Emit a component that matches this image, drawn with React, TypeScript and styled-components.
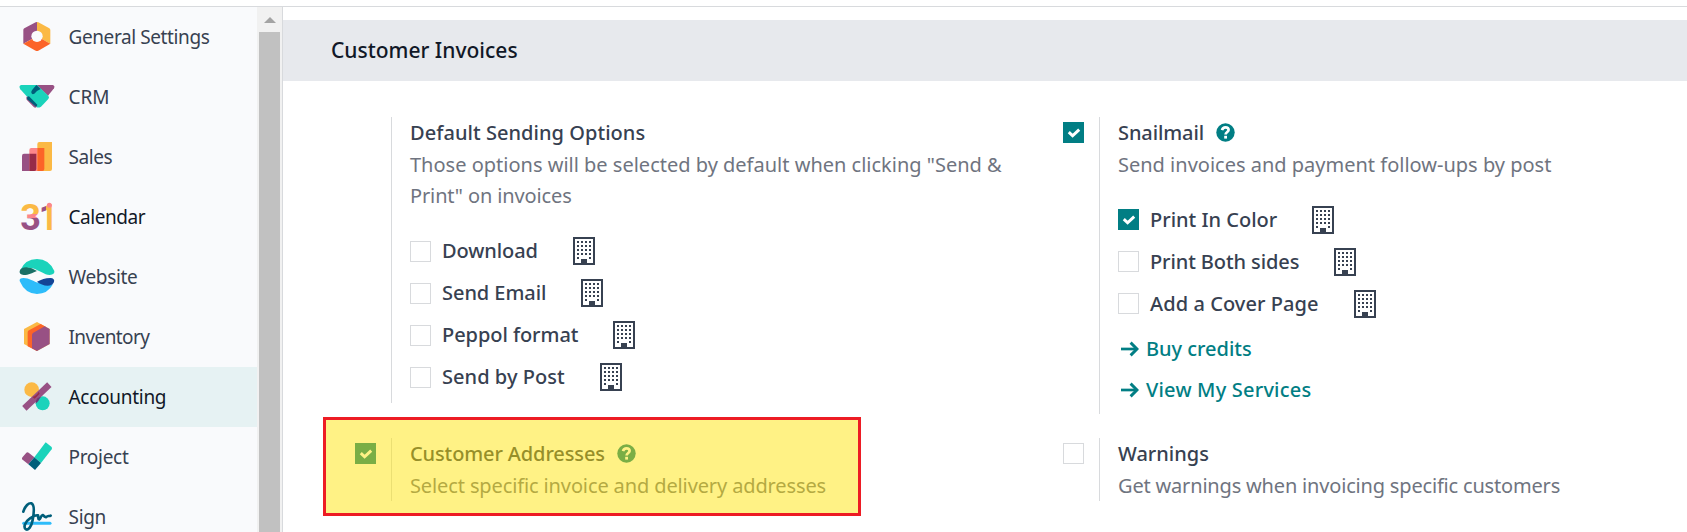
import React from 'react';
import styled, { createGlobalStyle } from 'styled-components';

const color = {
  purple: '#985184',
  yellow: '#fbb945',
  orange: '#fc6428',
  pink: '#fc868b',
  mint: '#1ad3bb',
  navy: '#005e7a',
  sky: '#2ebcfa',
  teal: '#017e84',
  text: '#374151',
  muted: '#6f7480',
  line: '#d8dadd',
};

const GlobalStyle = createGlobalStyle`
  * { box-sizing: border-box; }
  body {
    margin: 0;
    background: #fff;
    color: ${color.text};
    font: 400 20px/31.5px "Noto Sans", "Open Sans", sans-serif;
    overflow: hidden;
  }
`;

const Page = styled.div`
  display: flex;
  height: 532px;
  padding-top: 6px;
`;

const Sidebar = styled.aside`
  display: flex;
  flex: none;
  width: 283px;
  border-top: 1px solid ${color.line};
  border-right: 1px solid ${color.line};
  background: #f9fafc;
  overflow: hidden;
`;

const AppList = styled.nav`
  flex: none;
  width: 257px;
`;

const AppRow = styled.a<{ $active?: boolean; $strong?: boolean }>`
  display: flex;
  align-items: center;
  gap: 14px;
  height: 60px;
  padding-left: 18.5px;
  font-size: 19px;
  color: ${(p) => (p.$active || p.$strong ? '#111827' : color.text)};
  background: ${(p) => (p.$active ? '#e6f2f3' : 'transparent')};
`;

const AppIcon = styled.svg`
  flex: none;
  width: 36px;
  height: 36px;
  overflow: visible;
`;

const Label = styled.span<{ $track?: number }>`
  white-space: nowrap;
  letter-spacing: ${(p) => p.$track ?? 0}px;
`;

const AppName = styled(Label)`
  padding-top: 2px;
`;

const Scrollbar = styled.div`
  display: flex;
  flex: none;
  flex-direction: column;
  align-items: center;
  width: 25px;
  background: #f1f1f1;
`;

const ScrollUp = styled.div`
  width: 0;
  margin: 10px 0 9px;
  border: 6px solid transparent;
  border-top: 0;
  border-bottom-color: #a3a3a3;
`;

const ScrollThumb = styled.div`
  flex: 1;
  width: 21px;
  background: #c1c1c1;
`;

const Main = styled.main`
  flex: 1;
  min-width: 0;
  border-top: 1px solid ${color.line};
`;

const SectionTitle = styled.h2`
  display: flex;
  align-items: center;
  height: 61px;
  margin: 13px 0 36px;
  padding: 1px 0 0 48px;
  background: #e7e9ed;
  color: #111827;
  font-size: 21px;
  font-weight: 500;
`;

const SettingsGrid = styled.div`
  display: grid;
  grid-template-columns: 708px 632px;
  align-items: start;
  row-gap: 24px;
  padding-left: 72px;
`;

const Setting = styled.section`
  position: relative;
  display: grid;
  grid-template-columns: 21px 1fr;
  column-gap: 15px;
`;

const CheckCell = styled.div`
  padding-top: 5px;
`;

const Pane = styled.div<{ $height: number }>`
  height: ${(p) => p.$height}px;
  border-left: 1px solid ${color.line};
  padding-left: 18px;
`;

const Title = styled.div`
  display: flex;
  align-items: center;
  gap: 12px;
  font-weight: 500;
`;

const Description = styled.div<{ $track?: number }>`
  color: ${color.muted};
  letter-spacing: ${(p) => p.$track ?? 0}px;
`;

const Options = styled.div`
  padding-top: 18.5px;
`;

const Option = styled.label`
  display: flex;
  align-items: center;
  height: 42px;
  font-weight: 500;
`;

const OptionText = styled(Label)`
  margin: 0 35px 0 11px;
`;

const Box = styled.span<{ $on?: boolean }>`
  display: flex;
  align-items: center;
  justify-content: center;
  width: 21px;
  height: 21px;
  border: 1px solid ${(p) => (p.$on ? color.teal : color.line)};
  background: ${(p) => (p.$on ? color.teal : '#fff')};
`;

const Links = styled.div`
  padding-top: 4px;
`;

const ActionLink = styled.a`
  display: flex;
  align-items: center;
  gap: 7px;
  height: 41px;
  padding-left: 3px;
  color: ${color.teal};
  font-weight: 500;
`;

const Highlight = styled.div`
  position: absolute;
  left: -32px;
  top: -21px;
  width: 538px;
  height: 99px;
  border: 3px solid #ed1c24;
  background: rgba(255, 228, 0, 0.48);
  background-clip: padding-box;
`;

const Check = ({ on }: { on?: boolean }) => (
  <Box $on={on}>
    {on && (
      <svg width="14" height="12" viewBox="0 0 14 12">
        <path d="M1.8 5.2 L5.6 8.8 L12.2 2.6" fill="none" stroke="#fff" strokeWidth="3" />
      </svg>
    )}
  </Box>
);

const Help = () => (
  <svg width="19" height="19" viewBox="0 0 19 19">
    <circle cx="9.5" cy="9.5" r="9.2" fill={color.teal} />
    <path
      d="M6 7.2 C6.6 5.2 7.8 4.4 9.4 4.4 C11.4 4.4 12.6 5.5 12.6 7 C12.6 9 9.6 9 9.6 11.6"
      fill="none"
      stroke="#fff"
      strokeWidth="2.7"
    />
    <rect x="8.2" y="12.8" width="2.8" height="2.8" fill="#fff" />
  </svg>
);

const windows = [
  ...[4, 8, 12, 16].flatMap((y) => [4, 8, 12, 16].map((x) => [x, y])),
  [4, 20],
  [16, 20],
];

const Building = () => (
  <svg width="22" height="28" viewBox="0 0 22 28" shapeRendering="crispEdges">
    <rect x="1" y="1" width="20" height="26" fill="#fff" stroke={color.text} strokeWidth="2" />
    {windows.map(([x, y]) => (
      <rect key={`${x}-${y}`} x={x} y={y} width="2" height="2" fill={color.text} />
    ))}
    <rect x="8" y="22" width="6" height="5" fill={color.text} />
  </svg>
);

const Arrow = () => (
  <svg width="18" height="16" viewBox="0 0 18 16">
    <path d="M0 8 H16" stroke={color.teal} strokeWidth="2.7" />
    <path d="M9.6 1.6 L16 8 L9.6 14.4" fill="none" stroke={color.teal} strokeWidth="2.9" />
  </svg>
);

const icons: Record<string, React.ReactNode> = {
  settings: (
    <>
      <path d="M54 52 L13 74 V33 Q13 30 16 28 L50 10 Q52 9 54 9Z" fill={color.purple} />
      <path d="M54 52 L94 74 V33 Q94 30 91 28 L58 10 Q56 9 54 9Z" fill={color.yellow} />
      <path d="M54 52 L94 74 L58 95 Q54 97 50 95 L13 74Z" fill={color.orange} />
      <circle cx="54" cy="52" r="17" fill="#f9fafc" />
    </>
  ),
  crm: (
    <>
      <path d="M52 18 H101 Q109 20 105 28 L87 50Z" fill={color.purple} />
      <path d="M6 18 H54 L88 50 Q92 55 88 60 L66 83 Q58 88 52 84 L4 31 Q-2 21 6 18Z" fill={color.mint} />
      <path d="M24 52 L53 81 Q52 88 45 85 L23 62 Q20 56 24 52Z" fill={color.purple} />
      <path d="M30 52 L55 77 Q55 83 49 82 L24 60 Q24 51 30 52Z" fill={color.navy} />
      <path d="M52 18 L65 30 L54 36 L46 44 Q39 48 37 41 Q36 36 40 32Z" fill={color.navy} />
    </>
  ),
  sales: (
    <>
      <path d="M55 96 V15 Q55 9 61 9 H99 V90 Q99 96 93 96Z" fill={color.yellow} />
      <path d="M31 96 V33 Q31 27 37 27 H55 V96Z" fill={color.pink} />
      <path d="M55 27 H76 V90 Q76 96 70 96 H55Z" fill={color.orange} />
      <path d="M9 96 V50 Q9 44 15 44 H31 V96Z" fill={color.purple} />
      <path d="M31 44 H52 V90 Q52 96 46 96 H31Z" fill="#962b48" />
    </>
  ),
  calendar: (
    <>
      <defs>
        <linearGradient id="three" x1="0" y1="12" x2="0" y2="93" gradientUnits="userSpaceOnUse">
          <stop offset="0.42" stopColor={color.yellow} />
          <stop offset="0.42" stopColor={color.pink} />
          <stop offset="0.54" stopColor={color.pink} />
          <stop offset="0.54" stopColor={color.purple} />
        </linearGradient>
        <linearGradient id="one" x1="64" y1="0" x2="100" y2="0" gradientUnits="userSpaceOnUse">
          <stop offset="0.5" stopColor={color.purple} />
          <stop offset="0.5" stopColor={color.yellow} />
        </linearGradient>
      </defs>
      <g fontFamily="Roboto, sans-serif" fontSize="113" fontWeight="700">
        <text x="4" y="92" fill="url(#three)" textLength="62" lengthAdjust="spacingAndGlyphs">3</text>
        <text x="60" y="92" fill="url(#one)" textLength="56" lengthAdjust="spacingAndGlyphs">1</text>
      </g>
      <circle cx="91" cy="19" r="7.5" fill={color.pink} />
    </>
  ),
  website: (
    <>
      <path d="M4 34 Q18 0 54 0 Q90 0 106 36 Q108 47 92 48 C76 48 62 34 40 28 Q20 23 4 34Z" fill={color.mint} />
      <path d="M2 36 Q6 25 22 25 Q38 26 54 36 C38 42 30 48 14 48 Q0 47 2 36Z" fill="#1a6f66" />
      <path d="M2 66 Q0 57 14 57 C30 57 44 68 60 72 Q84 80 102 76 Q86 105 54 105 Q18 104 2 66Z" fill={color.sky} />
      <path d="M54 68 C68 62 78 57 94 57 Q108 58 105 69 Q101 80 86 80 Q68 79 54 68Z" fill="#144496" />
    </>
  ),
  inventory: (
    <>
      <path d="M54 9 L92 30 V75 L54 96 L15 75 V30Z" fill={color.yellow} />
      <path d="M65 15 L80 23 L54 96 L26 82 V40 Q26 36 30 34Z" fill={color.orange} />
      <path d="M77 22 L92 30 V75 L54 96 L39 88 V48 Q39 44 43 41Z" fill={color.purple} />
    </>
  ),
  accounting: (
    <>
      <circle cx="38" cy="32" r="22" fill={color.yellow} />
      <circle cx="71" cy="73" r="21" fill={color.mint} />
      <path d="M16 88 L91 17" stroke={color.purple} strokeWidth="19" />
      <path d="M40 54 Q54 49 59 38 L62 44 L47 59Z" fill="#962b48" />
      <path d="M50 69 Q52 56 65 53 L58 66 L50 74Z" fill="#6a3a75" />
    </>
  ),
  project: (
    <>
      <path d="M9 61 Q8 57 11 54 L22 41 Q25 38 29 41 L46 55 L28 76Z" fill={color.purple} />
      <path d="M46 55 L80 10 L97 23 Q101 27 98 31 L66 72Z" fill={color.mint} />
      <path d="M46 55 L66 72 L48 93 L28 76Z" fill={color.navy} />
    </>
  ),
  sign: (
    <>
      <path d="M14 73 H93" stroke={color.sky} strokeWidth="9" strokeLinecap="round" />
      <path
        d="M13 38 C19 20 29 11 37 13 C48 18 45 42 41 63 C37 84 28 94 21 91 C12 86 18 68 32 59 C42 52 53 48 57 49 C59 54 55 60 61 61 C66 58 65 49 71 48 C75 50 77 56 82 54 C87 48 90 53 95 50"
        fill="none"
        stroke={color.navy}
        strokeWidth="8"
        strokeLinecap="round"
        strokeLinejoin="round"
      />
    </>
  ),
};

const apps = [
  { icon: 'settings', name: 'General Settings', track: -0.4 },
  { icon: 'crm', name: 'CRM', track: 0 },
  { icon: 'sales', name: 'Sales', track: -0.4 },
  { icon: 'calendar', name: 'Calendar', track: -0.45, strong: true },
  { icon: 'website', name: 'Website', track: -0.33 },
  { icon: 'inventory', name: 'Inventory', track: -0.6 },
  { icon: 'accounting', name: 'Accounting', track: -0.28, active: true },
  { icon: 'project', name: 'Project', track: -0.3 },
  { icon: 'sign', name: 'Sign', track: -0.3 },
];

type OptionData = { name: string; track: number; on?: boolean };

const sendingOptions: OptionData[] = [
  { name: 'Download', track: -0.08 },
  { name: 'Send Email', track: -0.05 },
  { name: 'Peppol format', track: -0.06 },
  { name: 'Send by Post', track: 0.05 },
];

const mailOptions: OptionData[] = [
  { name: 'Print In Color', track: 0, on: true },
  { name: 'Print Both sides', track: -0.1 },
  { name: 'Add a Cover Page', track: 0.07 },
];

const OptionList = ({ items }: { items: OptionData[] }) => (
  <Options>
    {items.map((o) => (
      <Option key={o.name}>
        <Check on={o.on} />
        <OptionText $track={o.track}>{o.name}</OptionText>
        <Building />
      </Option>
    ))}
  </Options>
);

export default function App() {
  return (
    <>
      <GlobalStyle />
      <Page>
        <Sidebar>
          <AppList>
            {apps.map((a) => (
              <AppRow key={a.name} $active={a.active} $strong={a.strong}>
                <AppIcon viewBox="0 0 108 108">{icons[a.icon]}</AppIcon>
                <AppName $track={a.track}>{a.name}</AppName>
              </AppRow>
            ))}
          </AppList>
          <Scrollbar>
            <ScrollUp />
            <ScrollThumb />
          </Scrollbar>
        </Sidebar>
        <Main>
          <SectionTitle>Customer Invoices</SectionTitle>
          <SettingsGrid>
            <Setting>
              <CheckCell />
              <Pane $height={286}>
                <Title>
                  <Label $track={0.05}>Default Sending Options</Label>
                </Title>
                <Description>
                  Those options will be selected by default when clicking "Send &amp;
                  <br />
                  <Label $track={-0.13}>Print" on invoices</Label>
                </Description>
                <OptionList items={sendingOptions} />
              </Pane>
            </Setting>
            <Setting>
              <CheckCell>
                <Check on />
              </CheckCell>
              <Pane $height={297}>
                <Title>
                  <Label $track={-0.1}>Snailmail</Label>
                  <Help />
                </Title>
                <Description>Send invoices and payment follow-ups by post</Description>
                <OptionList items={mailOptions} />
                <Links>
                  <ActionLink>
                    <Arrow />
                    <Label $track={-0.03}>Buy credits</Label>
                  </ActionLink>
                  <ActionLink>
                    <Arrow />
                    <Label $track={0.2}>View My Services</Label>
                  </ActionLink>
                </Links>
              </Pane>
            </Setting>
            <Setting>
              <CheckCell>
                <Check on />
              </CheckCell>
              <Pane $height={63}>
                <Title>
                  <Label $track={-0.12}>Customer Addresses</Label>
                  <Help />
                </Title>
                <Description $track={-0.12}>Select specific invoice and delivery addresses</Description>
              </Pane>
              <Highlight />
            </Setting>
            <Setting>
              <CheckCell>
                <Check />
              </CheckCell>
              <Pane $height={63}>
                <Title>Warnings</Title>
                <Description $track={-0.18}>Get warnings when invoicing specific customers</Description>
              </Pane>
            </Setting>
          </SettingsGrid>
        </Main>
      </Page>
    </>
  );
}
